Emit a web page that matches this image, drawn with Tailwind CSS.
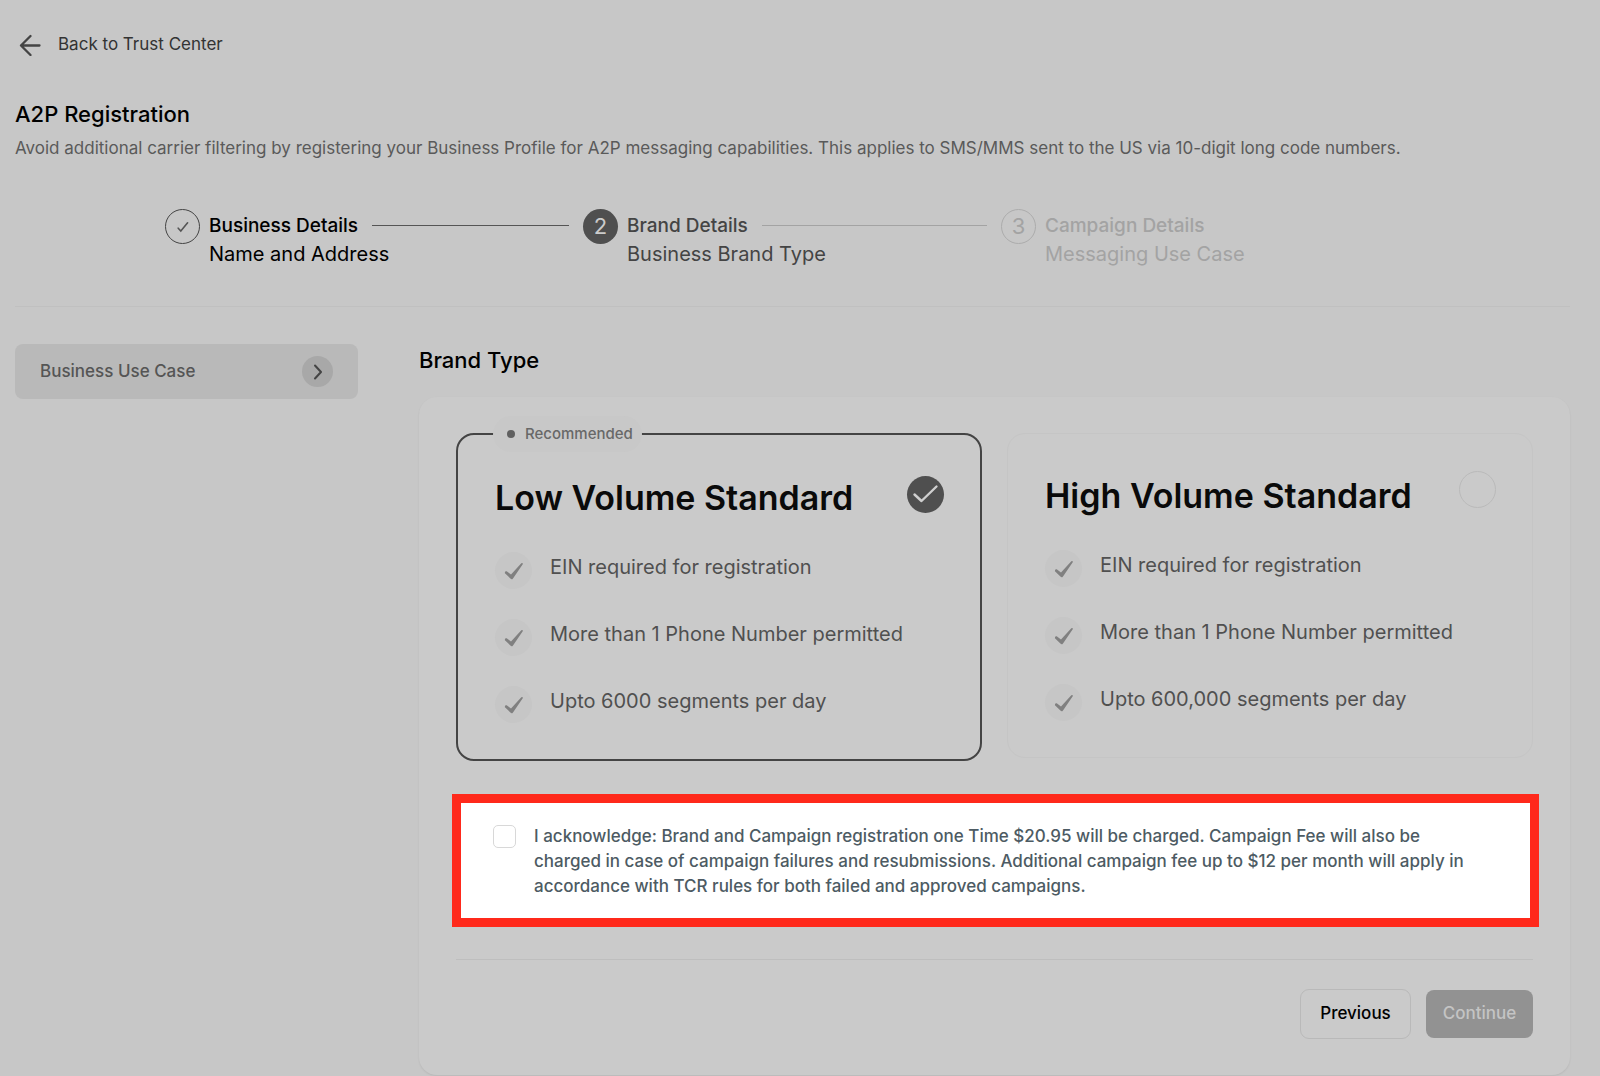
<!DOCTYPE html>
<html lang="en">
  <head>
    <meta charset="UTF-8" />
    <meta name="viewport" content="width=device-width, initial-scale=1.0" />
    <title>A2P Registration</title>
    <script src="https://cdn.jsdelivr.net/npm/@tailwindcss/browser@4"></script>
  </head>
  <body class="bg-[#c7c7c7] font-['Inter',sans-serif] text-black min-h-screen pl-[15px] pr-[30px] pt-[33px]">
    <!-- Header -->
    <header>
      <a href="#" class="inline-flex items-center gap-[17px] pl-1 h-6 text-[17px] text-[#333]">
        <svg class="w-[22px] h-[22px]" viewBox="0 0 22 22" fill="none" stroke="#444" stroke-width="2.3" stroke-linecap="round" stroke-linejoin="round">
          <path d="M20.5 11.500H2M11.500 2L2 11.500l9.500 9.500" />
        </svg>
        Back to Trust Center
      </a>
      <h1 class="mt-9 text-[22px] leading-8 font-medium">A2P Registration</h1>
      <p class="mt-[6px] text-[17px] leading-6 text-[#5a5a5a]">
        Avoid additional carrier filtering by registering your Business Profile for A2P messaging capabilities. This applies to SMS/MMS sent to the US via 10-digit long code numbers.
      </p>
    </header>

    <!-- Steps -->
    <ol class="mt-[51px] ml-[150px] grid grid-cols-3 max-w-[1254px] text-xl leading-[29px]">
      <li class="flex gap-[9px]">
        <span class="-mt-[2px] size-[35px] shrink-0 rounded-full border border-[#444] flex items-center justify-center">
          <svg class="w-3 h-3" viewBox="0 0 12 12" fill="none" stroke="#555" stroke-width="1.6" stroke-linecap="round">
            <path d="M1.2 7.2L3.8 10 10.6 1.8" />
          </svg>
        </span>
        <div class="flex-1">
          <div class="flex items-center gap-[14px] pr-[14px]">
            <span class="text-[19px] font-medium leading-[29px]">Business Details</span>
            <span class="flex-1 h-px bg-[#555]"></span>
          </div>
          <p>Name and Address</p>
        </div>
      </li>
      <li class="flex gap-[9px] text-[#444]">
        <span class="-mt-[2px] size-[35px] shrink-0 rounded-full bg-[#4f4f4f] text-[#cbcbcb] text-[22px] flex items-center justify-center">2</span>
        <div class="flex-1">
          <div class="flex items-center gap-[14px] pr-[14px]">
            <span class="text-[19px] font-medium leading-[29px]">Brand Details</span>
            <span class="flex-1 h-px bg-[#a3a3a3]"></span>
          </div>
          <p>Business Brand Type</p>
        </div>
      </li>
      <li class="flex gap-[9px] text-[#a3a3a3]">
        <span class="-mt-[2px] size-[35px] shrink-0 rounded-full border border-[#acacac] text-[22px] flex items-center justify-center">3</span>
        <div class="flex-1">
          <p class="text-[19px] font-medium leading-[29px]">Campaign Details</p>
          <p>Messaging Use Case</p>
        </div>
      </li>
    </ol>

    <hr class="mt-[37px] border-[#c0c0c0]" />

    <div class="mt-[37px] flex items-start gap-[61px]">
      <!-- Sidebar -->
      <nav class="w-[343px] shrink-0">
        <a href="#" class="flex items-center justify-between h-[55px] rounded-lg bg-[#b9b9b9] px-[25px] text-[17px] font-medium text-[#555]">
          Business Use Case
          <span class="size-[31px] rounded-full bg-[#a8a8a8] flex items-center justify-center">
            <svg class="w-[10px] h-4" viewBox="0 0 10 16" fill="none" stroke="#444" stroke-width="2" stroke-linecap="round" stroke-linejoin="round">
              <path d="M2 1.5L8 8 2 14.5" />
            </svg>
          </span>
        </a>
      </nav>

      <main class="flex-1">
        <h2 class="text-[22px] leading-8 font-medium">Brand Type</h2>

        <section class="mt-[21px] rounded-[18px] bg-[#cacaca] shadow-[0_1px_2px_rgba(0,0,0,0.08)] px-[37px] pt-9 pb-9">
          <!-- Brand options -->
          <div class="grid grid-cols-2 gap-[25px] items-start">
            <label class="relative rounded-[18px] border-2 border-[#444] pl-[37px] pr-9 pt-[41px] pb-[35px]">
              <span class="absolute -top-[19px] left-[35px] h-9 rounded-full bg-[#c8c8c8] pl-[14px] pr-[9px] flex items-center gap-[10px] text-[15px] font-medium text-[#686868]">
                <span class="size-2 rounded-full bg-[#606060]"></span>
                Recommended
              </span>
              <span class="flex items-start justify-between">
                <span class="text-[34px] leading-[44px] font-semibold text-[#0a0a0a]">Low Volume Standard</span>
                <span class="relative size-[37px] shrink-0">
                  <input type="radio" name="brand" checked class="block appearance-none size-[37px] rounded-full bg-[#4f4f4f]" />
                  <svg class="absolute inset-0 size-[37px]" viewBox="0 0 37 37" fill="none" stroke="#cfcfcf" stroke-width="2.4" stroke-linecap="round" stroke-linejoin="round">
                    <path d="M7.500 18.500L14.500 25 29.500 10.500" />
                  </svg>
                </span>
              </span>
              <ul class="mt-[33px] flex flex-col gap-[30px] text-xl leading-7 text-[#505050]">
                <li class="flex gap-[18px]">
                  <span class="-mt-px mb-px size-[37px] rounded-full bg-[#c6c6c6] flex items-center justify-center">
                    <svg class="size-5" viewBox="0 0 20 20" fill="#808080"><path d="M18.9 3L9 17.4q-1.3 1.8-2.6.1L.9 12.2q-.4-2.200 1.800-1.900L7 13.600 17.300 2.200q1.500-.6 1.600.8z" /></svg>
                  </span>
                  EIN required for registration
                </li>
                <li class="flex gap-[18px]">
                  <span class="-mt-px mb-px size-[37px] rounded-full bg-[#c6c6c6] flex items-center justify-center">
                    <svg class="size-5" viewBox="0 0 20 20" fill="#808080"><path d="M18.9 3L9 17.4q-1.3 1.8-2.6.1L.9 12.2q-.4-2.200 1.800-1.900L7 13.600 17.300 2.200q1.500-.6 1.600.8z" /></svg>
                  </span>
                  More than 1 Phone Number permitted
                </li>
                <li class="flex gap-[18px]">
                  <span class="-mt-px mb-px size-[37px] rounded-full bg-[#c6c6c6] flex items-center justify-center">
                    <svg class="size-5" viewBox="0 0 20 20" fill="#808080"><path d="M18.9 3L9 17.4q-1.3 1.8-2.6.1L.9 12.2q-.4-2.200 1.800-1.900L7 13.600 17.300 2.200q1.500-.6 1.600.8z" /></svg>
                  </span>
                  Upto 6000 segments per day
                </li>
              </ul>
            </label>

            <label class="rounded-[18px] border border-[#c5c5c5] pl-[37px] pr-9 pt-[37px] pb-[35px]">
              <span class="flex items-start justify-between">
                <span class="pt-[3px] text-[34px] leading-[44px] font-semibold text-[#0a0a0a]">High Volume Standard</span>
                <input type="radio" name="brand" class="block appearance-none size-[37px] shrink-0 rounded-full border border-[#bababa]" />
              </span>
              <ul class="mt-[33px] flex flex-col gap-[30px] text-xl leading-7 text-[#505050]">
                <li class="flex gap-[18px]">
                  <span class="-mt-px mb-px size-[37px] rounded-full bg-[#c6c6c6] flex items-center justify-center">
                    <svg class="size-5" viewBox="0 0 20 20" fill="#808080"><path d="M18.9 3L9 17.4q-1.3 1.8-2.6.1L.9 12.2q-.4-2.200 1.800-1.900L7 13.600 17.300 2.200q1.500-.6 1.600.8z" /></svg>
                  </span>
                  EIN required for registration
                </li>
                <li class="flex gap-[18px]">
                  <span class="-mt-px mb-px size-[37px] rounded-full bg-[#c6c6c6] flex items-center justify-center">
                    <svg class="size-5" viewBox="0 0 20 20" fill="#808080"><path d="M18.9 3L9 17.4q-1.3 1.8-2.6.1L.9 12.2q-.4-2.200 1.800-1.900L7 13.600 17.300 2.200q1.500-.6 1.600.8z" /></svg>
                  </span>
                  More than 1 Phone Number permitted
                </li>
                <li class="flex gap-[18px]">
                  <span class="-mt-px mb-px size-[37px] rounded-full bg-[#c6c6c6] flex items-center justify-center">
                    <svg class="size-5" viewBox="0 0 20 20" fill="#808080"><path d="M18.9 3L9 17.4q-1.3 1.8-2.6.1L.9 12.2q-.4-2.200 1.800-1.900L7 13.600 17.300 2.200q1.500-.6 1.600.8z" /></svg>
                  </span>
                  Upto 600,000 segments per day
                </li>
              </ul>
            </label>
          </div>

          <!-- Acknowledgement -->
          <div class="mt-[33px] -ml-1 -mr-[6px] border-[9px] border-[#ff291b] bg-white pl-8 pr-[50px] pt-[21px] pb-[19px] flex items-start gap-[18px]">
            <input id="acknowledge" type="checkbox" class="mt-px appearance-none size-[23px] shrink-0 rounded-[5px] border border-[#d8d8d8] bg-white checked:bg-[#4f4f4f]" />
            <label for="acknowledge" class="text-[17px] leading-[25px] font-medium text-[#4d5b63]">
              I acknowledge: Brand and Campaign registration one Time $20.95 will be charged. Campaign Fee will also be charged in case of campaign failures and resubmissions. Additional campaign fee up to $12 per month will apply in accordance with TCR rules for both failed and approved campaigns.
            </label>
          </div>

          <hr class="mt-8 border-[#bebebe]" />

          <div class="mt-[29px] flex justify-end items-center gap-[15px] text-[17px] font-medium">
            <button type="button" class="h-[50px] w-[111px] rounded-[9px] border border-[#b9b9b9]">Previous</button>
            <button type="button" class="h-12 w-[107px] rounded-lg bg-[#929292] text-[#c4c4c4]">Continue</button>
          </div>
        </section>
      </main>
    </div>
  </body>
</html>
